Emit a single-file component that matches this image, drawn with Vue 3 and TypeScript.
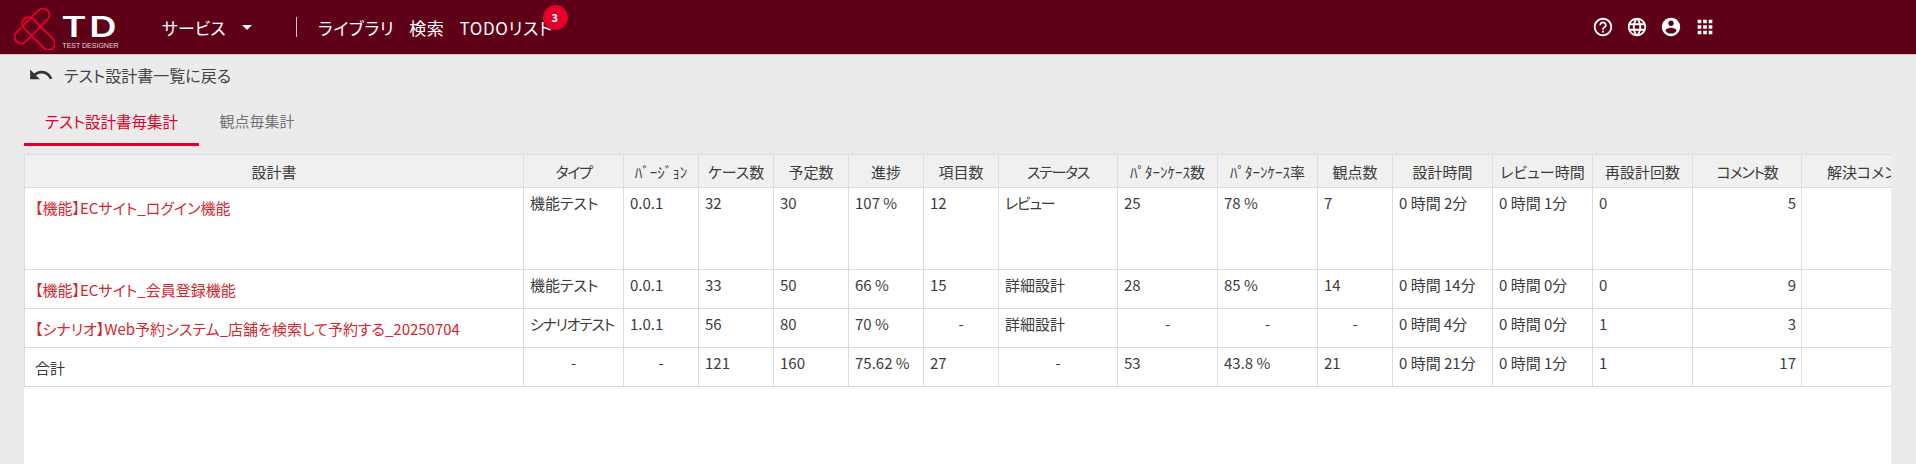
<script setup lang="ts">
type Col = { label: string; width: number }
type Row = { name: string; isLink: boolean; cells: string[]; tall?: boolean }

const columns: Col[] = [
  { label: '設計書', width: 499 },
  { label: 'タイプ', width: 100 },
  { label: 'ﾊﾞｰｼﾞｮﾝ', width: 75 },
  { label: 'ケース数', width: 75 },
  { label: '予定数', width: 75 },
  { label: '進捗', width: 75 },
  { label: '項目数', width: 75 },
  { label: 'ステータス', width: 119 },
  { label: 'ﾊﾟﾀｰﾝｹｰｽ数', width: 100 },
  { label: 'ﾊﾟﾀｰﾝｹｰｽ率', width: 100 },
  { label: '観点数', width: 75 },
  { label: '設計時間', width: 100 },
  { label: 'レビュー時間', width: 100 },
  { label: '再設計回数', width: 100 },
  { label: 'コメント数', width: 109 },
  { label: '解決コメント数', width: 148 }
]

const rows: Row[] = [
  {
    name: '【機能】ECサイト_ログイン機能',
    isLink: true,
    tall: true,
    cells: ['機能テスト', '0.0.1', '32', '30', '107 %', '12', 'レビュー', '25', '78 %', '7', '0 時間 2分', '0 時間 1分', '0', '5', '']
  },
  {
    name: '【機能】ECサイト_会員登録機能',
    isLink: true,
    cells: ['機能テスト', '0.0.1', '33', '50', '66 %', '15', '詳細設計', '28', '85 %', '14', '0 時間 14分', '0 時間 0分', '0', '9', '']
  },
  {
    name: '【シナリオ】Web予約システム_店舗を検索して予約する_20250704',
    isLink: true,
    cells: ['シナリオテスト', '1.0.1', '56', '80', '70 %', '-', '詳細設計', '-', '-', '-', '0 時間 4分', '0 時間 0分', '1', '3', '']
  },
  {
    name: '合計',
    isLink: false,
    cells: ['-', '-', '121', '160', '75.62 %', '27', '-', '53', '43.8 %', '21', '0 時間 21分', '0 時間 1分', '1', '17', '']
  }
]

const navLinks = ['ライブラリ', '検索', 'TODOリスト']

// カタカナだけの語は元の画面だと詰まって見える
const isKana = (text: string) => /^[ァ-ヶー]+$/.test(text)

// コメント数の列だけ右寄せ
const cellClass = (i: number, value: string) => ({
  dash: value === '-',
  num: i === 13,
  kana: isKana(value)
})
</script>

<template>
  <div class="page">
    <header class="topbar">
      <div class="logo">
        <svg class="logo-mark" viewBox="0 0 41 42" width="41" height="42" fill="none" stroke="#e4002b" stroke-width="1.8">
          <rect x="-6.5" y="-22" width="13" height="44" rx="6.5" transform="translate(18 18) rotate(45)" />
          <rect x="-6.5" y="-20.5" width="13" height="41" rx="6.5" transform="translate(24.5 25.5) rotate(-45)" />
        </svg>
        <div class="logo-text">
          <span class="logo-big">TD</span>
          <span class="logo-small">TEST DESIGNER</span>
        </div>
      </div>

      <div class="service">
        <span>サービス</span>
        <svg viewBox="0 0 24 24" width="24" height="24" fill="#fff"><path d="M7 10l5 5 5-5z" /></svg>
      </div>
      <span class="divider"></span>

      <nav class="nav">
        <a v-for="link in navLinks" :key="link" class="nav-link">{{ link }}</a>
        <span class="badge">3</span>
      </nav>

      <div class="icons">
        <svg viewBox="0 0 24 24" fill="#fff"><path d="M11 18h2v-2h-2v2zm1-16C6.48 2 2 6.48 2 12s4.48 10 10 10 10-4.48 10-10S17.52 2 12 2zm0 18c-4.41 0-8-3.59-8-8s3.59-8 8-8 8 3.59 8 8-3.59 8-8 8zm0-14c-2.21 0-4 1.79-4 4h2c0-1.1.9-2 2-2s2 .9 2 2c0 2-3 1.75-3 5h2c0-2.25 3-2.5 3-5 0-2.21-1.79-4-4-4z" /></svg>
        <svg viewBox="0 0 24 24" fill="#fff"><path d="M11.99 2C6.47 2 2 6.48 2 12s4.47 10 9.99 10C17.52 22 22 17.52 22 12S17.52 2 11.99 2zm6.93 6h-2.95c-.32-1.25-.78-2.45-1.38-3.56 1.84.63 3.37 1.91 4.33 3.56zM12 4.04c.83 1.2 1.48 2.53 1.91 3.96h-3.82c.43-1.43 1.08-2.76 1.91-3.96zM4.26 14C4.1 13.36 4 12.69 4 12s.1-1.36.26-2h3.38c-.08.66-.14 1.32-.14 2 0 .68.06 1.34.14 2H4.26zm.82 2h2.95c.32 1.25.78 2.45 1.38 3.56-1.84-.63-3.37-1.9-4.33-3.56zm2.95-8H5.08c.96-1.66 2.49-2.93 4.33-3.56C8.81 5.55 8.35 6.75 8.03 8zM12 19.96c-.83-1.2-1.48-2.53-1.91-3.96h3.82c-.43 1.43-1.08 2.76-1.91 3.96zM14.34 14H9.66c-.09-.66-.16-1.32-.16-2 0-.68.07-1.35.16-2h4.68c.09.65.16 1.32.16 2 0 .68-.07 1.34-.16 2zm.25 5.56c.6-1.11 1.06-2.31 1.38-3.56h2.95c-.96 1.65-2.49 2.93-4.33 3.56zM16.36 14c.08-.66.14-1.32.14-2 0-.68-.06-1.34-.14-2h3.38c.16.64.26 1.31.26 2s-.1 1.36-.26 2h-3.38z" /></svg>
        <svg viewBox="0 0 24 24" fill="#fff"><path d="M12 2C6.48 2 2 6.48 2 12s4.48 10 10 10 10-4.48 10-10S17.52 2 12 2zm0 3c1.66 0 3 1.34 3 3s-1.34 3-3 3-3-1.34-3-3 1.34-3 3-3zm0 14.2c-2.5 0-4.71-1.28-6-3.22.03-1.99 4-3.08 6-3.08 1.99 0 5.97 1.09 6 3.08-1.29 1.94-3.5 3.22-6 3.22z" /></svg>
        <svg viewBox="0 0 24 24" fill="#fff"><path d="M4 8h4V4H4v4zm6 12h4v-4h-4v4zm-6 0h4v-4H4v4zm0-6h4v-4H4v4zm6 0h4v-4h-4v4zm6-10v4h4V4h-4zm-6 4h4V4h-4v4zm6 6h4v-4h-4v4zm0 6h4v-4h-4v4z" /></svg>
      </div>
    </header>

    <div class="back">
      <svg viewBox="0 0 24 24" width="26" height="26" fill="#333"><path d="M12.5 8c-2.65 0-5.05.99-6.9 2.6L2 7v9h9l-3.62-3.62c1.39-1.16 3.16-1.88 5.12-1.88 3.54 0 6.55 2.31 7.6 5.5l2.37-.78C21.08 11.03 17.15 8 12.5 8z" /></svg>
      <span>テスト設計書一覧に戻る</span>
    </div>

    <div class="tabs">
      <div class="tab active">テスト設計書毎集計</div>
      <div class="tab">観点毎集計</div>
    </div>

    <main class="panel">
      <table class="summary">
        <colgroup>
          <col v-for="c in columns" :key="c.label" :style="{ width: c.width + 'px' }" />
        </colgroup>
        <thead>
          <tr>
            <th v-for="c in columns" :key="c.label" :class="{ kana: isKana(c.label) || c.label === 'コメント数' }">{{ c.label }}</th>
          </tr>
        </thead>
        <tbody>
          <tr v-for="row in rows" :key="row.name" :class="{ tall: row.tall }">
            <td class="name" :class="{ link: row.isLink }">{{ row.name }}</td>
            <td v-for="(value, i) in row.cells" :key="i" :class="cellClass(i, value)">{{ value }}</td>
          </tr>
        </tbody>
      </table>
    </main>
  </div>
</template>

<style scoped>
.page {
  height: 464px;
  display: flex;
  flex-direction: column;
  background: #ebebeb;
  color: #444;
  font-family: "Noto Sans CJK JP", "Noto Sans", sans-serif;
  font-feature-settings: "palt";
  overflow: hidden;
}

.topbar {
  flex: none;
  height: 54px;
  box-sizing: content-box;
  display: flex;
  align-items: center;
  padding-left: 14px;
  background: #5e0018;
  border-bottom: 1px solid #d9c3c8;
  color: #fff;
}

.logo {
  display: flex;
  align-items: center;
  gap: 8px;
  width: 148px;
}

.logo-mark {
  flex: none;
  margin-top: 4px;
}

.logo-text {
  display: flex;
  flex-direction: column;
  align-items: center;
  width: 55px;
  padding-top: 8px;
}

.logo-big {
  font-family: "Inter", sans-serif;
  font-size: 28px;
  font-weight: 600;
  line-height: 28px;
  letter-spacing: 2px;
  transform: scaleX(1.35);
}

.logo-small {
  font-family: "Liberation Sans", sans-serif;
  font-size: 7px;
  line-height: 9px;
  white-space: nowrap;
  color: #e6d5d9;
}

.service {
  display: flex;
  align-items: center;
  gap: 9px;
  font-size: 17px;
  width: 134px;
}

.divider {
  width: 1px;
  height: 20px;
  background: #d8c4c9;
}

.nav {
  position: relative;
  display: flex;
  align-items: center;
  gap: 15px;
  margin-left: 21px;
  font-size: 17px;
  letter-spacing: 0.6px;
}

.nav-link {
  color: #fff;
  white-space: nowrap;
}

.badge {
  position: absolute;
  top: -10px;
  right: -15px;
  width: 25px;
  height: 25px;
  border-radius: 50%;
  background: #e4002b;
  color: #fff;
  font-size: 11px;
  font-weight: 700;
  line-height: 25px;
  text-align: center;
}

.icons {
  margin-left: auto;
  padding-right: 200px;
  display: flex;
  gap: 12px;
}

.icons svg {
  width: 22px;
  height: 22px;
}

.back {
  flex: none;
  display: flex;
  align-items: center;
  gap: 10px;
  height: 40px;
  padding-left: 28px;
  font-size: 16px;
  color: #444;
}

.tabs {
  flex: none;
  display: flex;
  height: 50px;
  margin-left: 24px;
  margin-top: 1px;
}

.tab {
  width: 175px;
  box-sizing: border-box;
  padding-top: 14px;
  text-align: center;
  font-size: 15px;
  color: #757575;
}

.tab + .tab {
  width: 120px;
  padding-right: 4px;
}

.tab.active {
  font-size: 15.5px;
  color: #e4002b;
  border-bottom: 3px solid #e4002b;
  height: 50px;
}

.panel {
  flex: 1;
  margin: 8px 25px 0 24px;
  background: #fff;
  overflow: hidden;
}

.summary {
  table-layout: fixed;
  width: 1925px;
  border-collapse: collapse;
  font-size: 15px;
  color: #3c3c3c;
}

.summary th,
.summary td {
  border: 1px solid #dcdcdc;
  padding: 0 6px;
  overflow: hidden;
  white-space: nowrap;
}

.summary th {
  height: 32px;
  background: #f0f0f0;
  font-weight: 400;
  text-align: center;
}

.summary .kana {
  letter-spacing: -1.3px;
}

.summary td {
  height: 39px;
  vertical-align: top;
  padding-top: 4px;
  box-sizing: border-box;
}

.summary tr.tall td {
  height: 82px;
}

.summary td.name {
  padding-top: 9px;
  padding-left: 10px;
}

.summary td.link {
  color: #d4272f;
}

.summary td.dash {
  text-align: center;
}

.summary td.num {
  text-align: right;
  padding-right: 5px;
}
</style>

<style>
body {
  background: #ebebeb;
}
</style>
